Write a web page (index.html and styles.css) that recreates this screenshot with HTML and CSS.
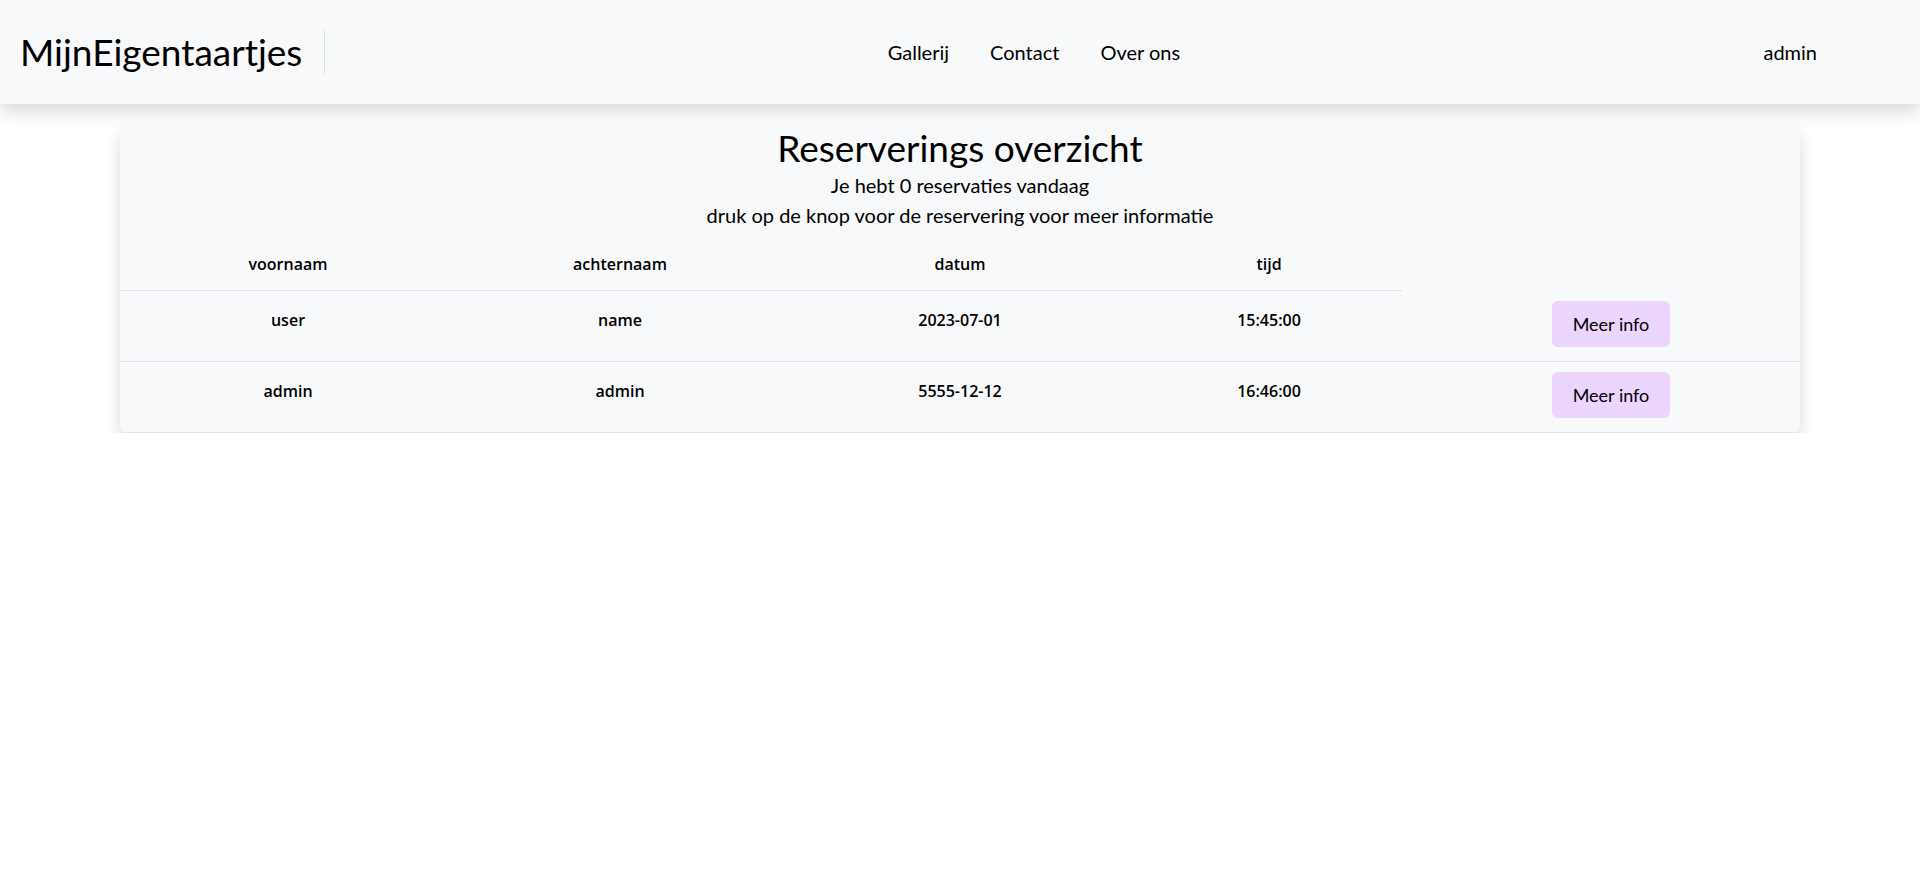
FILE: index.html
```html
<!DOCTYPE html>
<html lang="nl">
<head>
<meta charset="utf-8">
<title>Reserveringen</title>
<link rel="stylesheet" href="styles.css">
</head>
<body>
<nav class="navbar">
  <a class="brand" href="#">MijnEigentaartjes</a>
  <div class="vr"></div>
  <ul class="nav-links">
    <li><a href="#">Gallerij</a></li>
    <li><a href="#">Contact</a></li>
    <li><a href="#">Over ons</a></li>
  </ul>
  <div class="user">admin</div>
</nav>

<main class="card">
  <h1 class="title">Reserverings overzicht</h1>
  <p class="sub">Je hebt 0 reservaties vandaag</p>
  <p class="sub">druk op de knop voor de reservering voor meer informatie</p>
  <table class="res-table">
    <colgroup>
      <col class="c1"><col class="c2"><col class="c3"><col class="c4"><col class="c5">
    </colgroup>
    <thead>
      <tr>
        <th>voornaam</th>
        <th>achternaam</th>
        <th>datum</th>
        <th>tijd</th>
      </tr>
    </thead>
    <tbody>
      <tr>
        <td>user</td>
        <td>name</td>
        <td>2023-07-01</td>
        <td>15:45:00</td>
        <td class="act"><button class="btn">Meer info</button></td>
      </tr>
      <tr>
        <td>admin</td>
        <td>admin</td>
        <td>5555-12-12</td>
        <td>16:46:00</td>
        <td class="act"><button class="btn">Meer info</button></td>
      </tr>
    </tbody>
  </table>
</main>
</body>
</html>
```

FILE: styles.css
```css
* { box-sizing: border-box; }

body {
  margin: 0;
  background: #fff;
  color: #000;
  font-family: Lato, "Noto Sans", sans-serif;
}

a { color: inherit; text-decoration: none; }

.navbar {
  height: 104px;
  background: #f8f9fa;
  box-shadow: 0 8px 16px rgba(0, 0, 0, 0.15);
  display: flex;
  align-items: center;
  padding-left: 20px;
  position: relative;
  z-index: 1;
}

.brand {
  font-size: 37px;
  line-height: 60px;
  margin-right: 22px;
}

.vr {
  width: 1px;
  height: 44px;
  background: #dcdfe2;
}

.nav-links {
  flex: 1;
  display: flex;
  justify-content: center;
  list-style: none;
  margin: 0;
  padding: 0;
  gap: 41px;
  font-size: 20px;
  line-height: 24px;
}

.user {
  font-size: 20px;
  line-height: 24px;
  margin-left: 21px;
  margin-right: 103px;
}

.card {
  margin: 21px 120px 0;
  background: #f8f9fa;
  border-radius: 8px;
  box-shadow: 0 8px 16px rgba(0, 0, 0, 0.15);
  padding-top: 1px;
  overflow: hidden;
}

.title {
  margin: 0;
  text-align: center;
  font-size: 37px;
  font-weight: 400;
  line-height: 1.2;
}

.sub {
  margin: 0;
  text-align: center;
  font-size: 20px;
  line-height: 30px;
}

.res-table {
  width: 100%;
  border-collapse: collapse;
  margin-top: 13px;
  table-layout: fixed;
  font-family: "Open Sans", Lato, sans-serif;
  font-size: 16px;
  line-height: 24px;
  font-weight: 600;
}

.c1 { width: 336px; }
.c2 { width: 328px; }
.c3 { width: 352px; }
.c4 { width: 266px; }
.c5 { width: 398px; }

.res-table th {
  padding: 9px 8px 14px;
  text-align: center;
  border-bottom: 1px solid #dee2e6;
  font-weight: 600;
}

.res-table td {
  padding: 17px 8px 8px;
  text-align: center;
  vertical-align: top;
  border-bottom: 1px solid #dee2e6;
}

.res-table td.act {
  padding: 10px 0 14px 20px;
}

.btn {
  width: 118px;
  height: 46px;
  border: 0;
  border-radius: 6px;
  background: #ebd5fd;
  color: #000;
  font-family: Lato, sans-serif;
  font-size: 18px;
  padding: 0;
  display: block;
  margin: 0 auto;
}
```
